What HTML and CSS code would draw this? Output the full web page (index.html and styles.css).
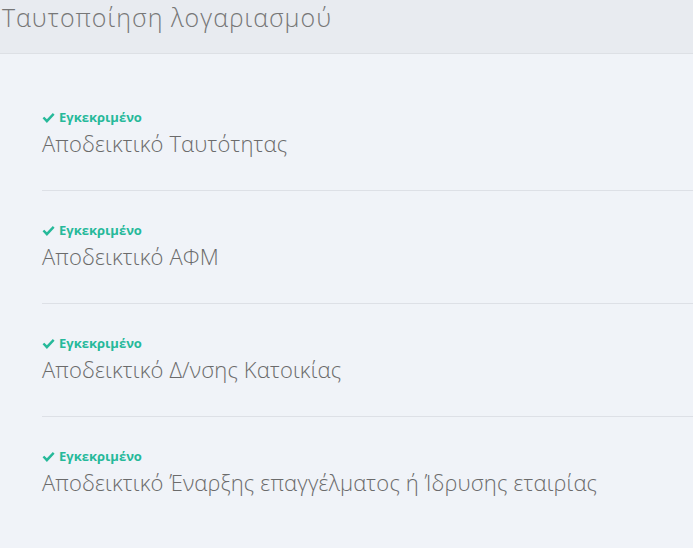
FILE: index.html
```html
<!DOCTYPE html>
<html lang="el">
<head>
    <meta charset="UTF-8">
    <title>Ταυτοποίηση λογαριασμού</title>
    <link rel="stylesheet" href="styles.css">
</head>
<body>
    <div class="page-header">
        <h1 class="page-title">Ταυτοποίηση λογαριασμού</h1>
    </div>

    <div class="doc-list">
        <div class="doc-item">
            <div class="doc-status">
                <svg viewBox="0 0 24 24"><path d="M20 3.5 9 15.2 4.2 10.4 1 13.6l8 8.4L23.2 6.7z"/></svg>
                Εγκεκριμένο
            </div>
            <div class="doc-name">Αποδεικτικό Ταυτότητας</div>
        </div>
        <div class="doc-item">
            <div class="doc-status">
                <svg viewBox="0 0 24 24"><path d="M20 3.5 9 15.2 4.2 10.4 1 13.6l8 8.4L23.2 6.7z"/></svg>
                Εγκεκριμένο
            </div>
            <div class="doc-name">Αποδεικτικό ΑΦΜ</div>
        </div>
        <div class="doc-item">
            <div class="doc-status">
                <svg viewBox="0 0 24 24"><path d="M20 3.5 9 15.2 4.2 10.4 1 13.6l8 8.4L23.2 6.7z"/></svg>
                Εγκεκριμένο
            </div>
            <div class="doc-name">Αποδεικτικό Δ/νσης Κατοικίας</div>
        </div>
        <div class="doc-item">
            <div class="doc-status">
                <svg viewBox="0 0 24 24"><path d="M20 3.5 9 15.2 4.2 10.4 1 13.6l8 8.4L23.2 6.7z"/></svg>
                Εγκεκριμένο
            </div>
            <div class="doc-name">Αποδεικτικό Έναρξης επαγγέλματος ή Ίδρυσης εταιρίας</div>
        </div>
    </div>
</body>
</html>
```

FILE: styles.css
```css
* {
    margin: 0;
    padding: 0;
    box-sizing: border-box;
}

body {
    font-family: "Open Sans", "Noto Sans", sans-serif;
    background: #f0f3f8;
    color: #666;
}

/* Header */
.page-header {
    background: #e8ebf0;
    height: 54px;
    border-bottom: 1px solid #dde0e5;
    padding: 0 2px;
}

.page-title {
    font-size: 25px;
    font-weight: 300;
    color: #777;
    line-height: 34px;
    letter-spacing: 1px;
}

/* Documents */
.doc-list {
    padding: 24px 0 0 42px;
}

.doc-item {
    height: 112px;
    padding-top: 31px;
}

.doc-item + .doc-item {
    height: 113px;
    border-top: 1px solid #dde0e6;
}

.doc-status {
    display: flex;
    align-items: center;
    font-size: 13px;
    font-weight: 700;
    color: #26b99a;
    line-height: 16px;
}

.doc-status svg {
    width: 13px;
    height: 13px;
    fill: currentColor;
    margin-right: 4px;
}

.doc-name {
    font-size: 22px;
    font-weight: 300;
    color: #6b6b6b;
    line-height: 30px;
    margin-top: 3px;
    letter-spacing: 0.15px;
}
```
